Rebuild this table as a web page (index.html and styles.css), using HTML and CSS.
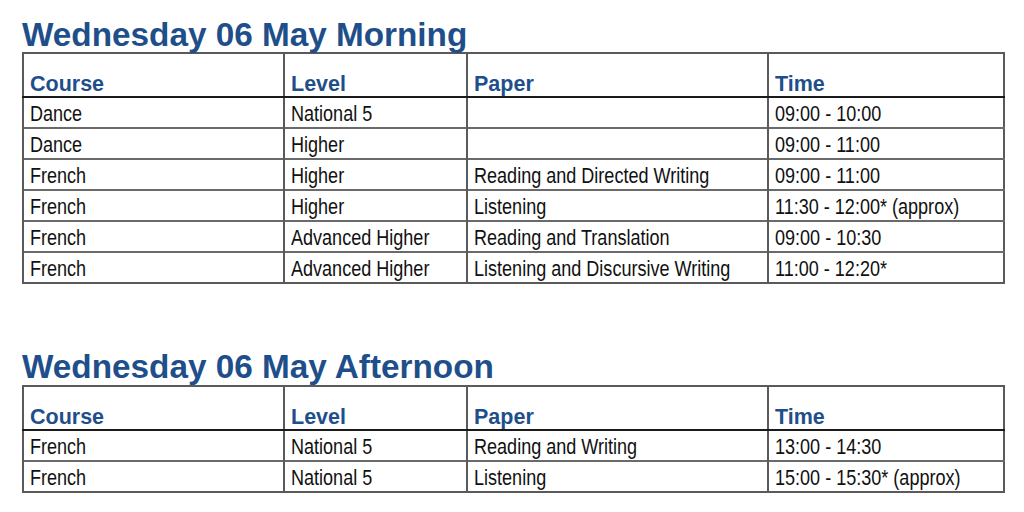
FILE: index.html
```html
<!DOCTYPE html>
<html>
<head>
<meta charset="utf-8">
<link rel="stylesheet" href="styles.css">
</head>
<body>
<section class="session">
  <h2 class="session-title">Wednesday 06 May Morning</h2>
  <table class="timetable">
    <colgroup><col class="c1"><col class="c2"><col class="c3"><col class="c4"></colgroup>
    <thead>
      <tr><th>Course</th><th>Level</th><th>Paper</th><th>Time</th></tr>
    </thead>
    <tbody>
      <tr><td><span class="t">Dance</span></td><td><span class="t">National 5</span></td><td></td><td><span class="t">09:00 - 10:00</span></td></tr>
      <tr><td><span class="t">Dance</span></td><td><span class="t">Higher</span></td><td></td><td><span class="t">09:00 - 11:00</span></td></tr>
      <tr><td><span class="t">French</span></td><td><span class="t">Higher</span></td><td><span class="t">Reading and Directed Writing</span></td><td><span class="t">09:00 - 11:00</span></td></tr>
      <tr><td><span class="t">French</span></td><td><span class="t">Higher</span></td><td><span class="t">Listening</span></td><td><span class="t">11:30 - 12:00* (approx)</span></td></tr>
      <tr><td><span class="t">French</span></td><td><span class="t">Advanced Higher</span></td><td><span class="t">Reading and Translation</span></td><td><span class="t">09:00 - 10:30</span></td></tr>
      <tr><td><span class="t">French</span></td><td><span class="t">Advanced Higher</span></td><td><span class="t">Listening and Discursive Writing</span></td><td><span class="t">11:00 - 12:20*</span></td></tr>
    </tbody>
  </table>
</section>
<section class="session second">
  <h2 class="session-title">Wednesday 06 May Afternoon</h2>
  <table class="timetable">
    <colgroup><col class="c1"><col class="c2"><col class="c3"><col class="c4"></colgroup>
    <thead>
      <tr><th>Course</th><th>Level</th><th>Paper</th><th>Time</th></tr>
    </thead>
    <tbody>
      <tr><td><span class="t">French</span></td><td><span class="t">National 5</span></td><td><span class="t">Reading and Writing</span></td><td><span class="t">13:00 - 14:30</span></td></tr>
      <tr><td><span class="t">French</span></td><td><span class="t">National 5</span></td><td><span class="t">Listening</span></td><td><span class="t">15:00 - 15:30* (approx)</span></td></tr>
    </tbody>
  </table>
</section>
</body>
</html>
```
FILE: styles.css
```css
html, body {
  margin: 0;
  padding: 0;
  background: #ffffff;
}
body {
  padding: 18px 0 0 22px;
  font-family: "Liberation Sans", Arial, sans-serif;
}
.session-title {
  margin: 0 0 1px 0;
  font-size: 33.3px;
  line-height: 33px;
  font-weight: bold;
  color: #1f4f8a;
}
.second .session-title {
  margin-bottom: 2px;
}
.second {
  margin-top: 66px;
}
.timetable {
  border-collapse: collapse;
  width: 981px;
  table-layout: fixed;
  border: 2px solid #5a5a5a;
}
.c1 { width: 261px; }
.c2 { width: 183px; }
.c3 { width: 301px; }
.c4 { width: 236px; }
.timetable th {
  height: 42px;
  padding: 0 0 0 6px;
  text-align: left;
  vertical-align: bottom;
  font-family: "Liberation Sans", Arial, sans-serif;
  font-size: 21.5px;
  line-height: 24px;
  font-weight: bold;
  color: #1f4f8a;
  border-left: 2px solid #5a5a5a;
  border-bottom: 2px solid #1a1a1a;
}
.timetable td {
  height: 26px;
  padding: 3px 0 0 6px;
  font-family: "Liberation Sans", Arial, sans-serif;
  font-size: 22px;
  line-height: 26px;
  color: #111111;
  border-left: 2px solid #5a5a5a;
  border-top: 2px solid #6a6a6a;
  white-space: nowrap;
  vertical-align: top;
  overflow: visible;
}
.timetable .t {
  display: inline-block;
  transform: scaleX(0.82);
  transform-origin: left center;
}
.timetable tbody tr:first-child td {
  border-top: 2px solid #1a1a1a;
}
```
